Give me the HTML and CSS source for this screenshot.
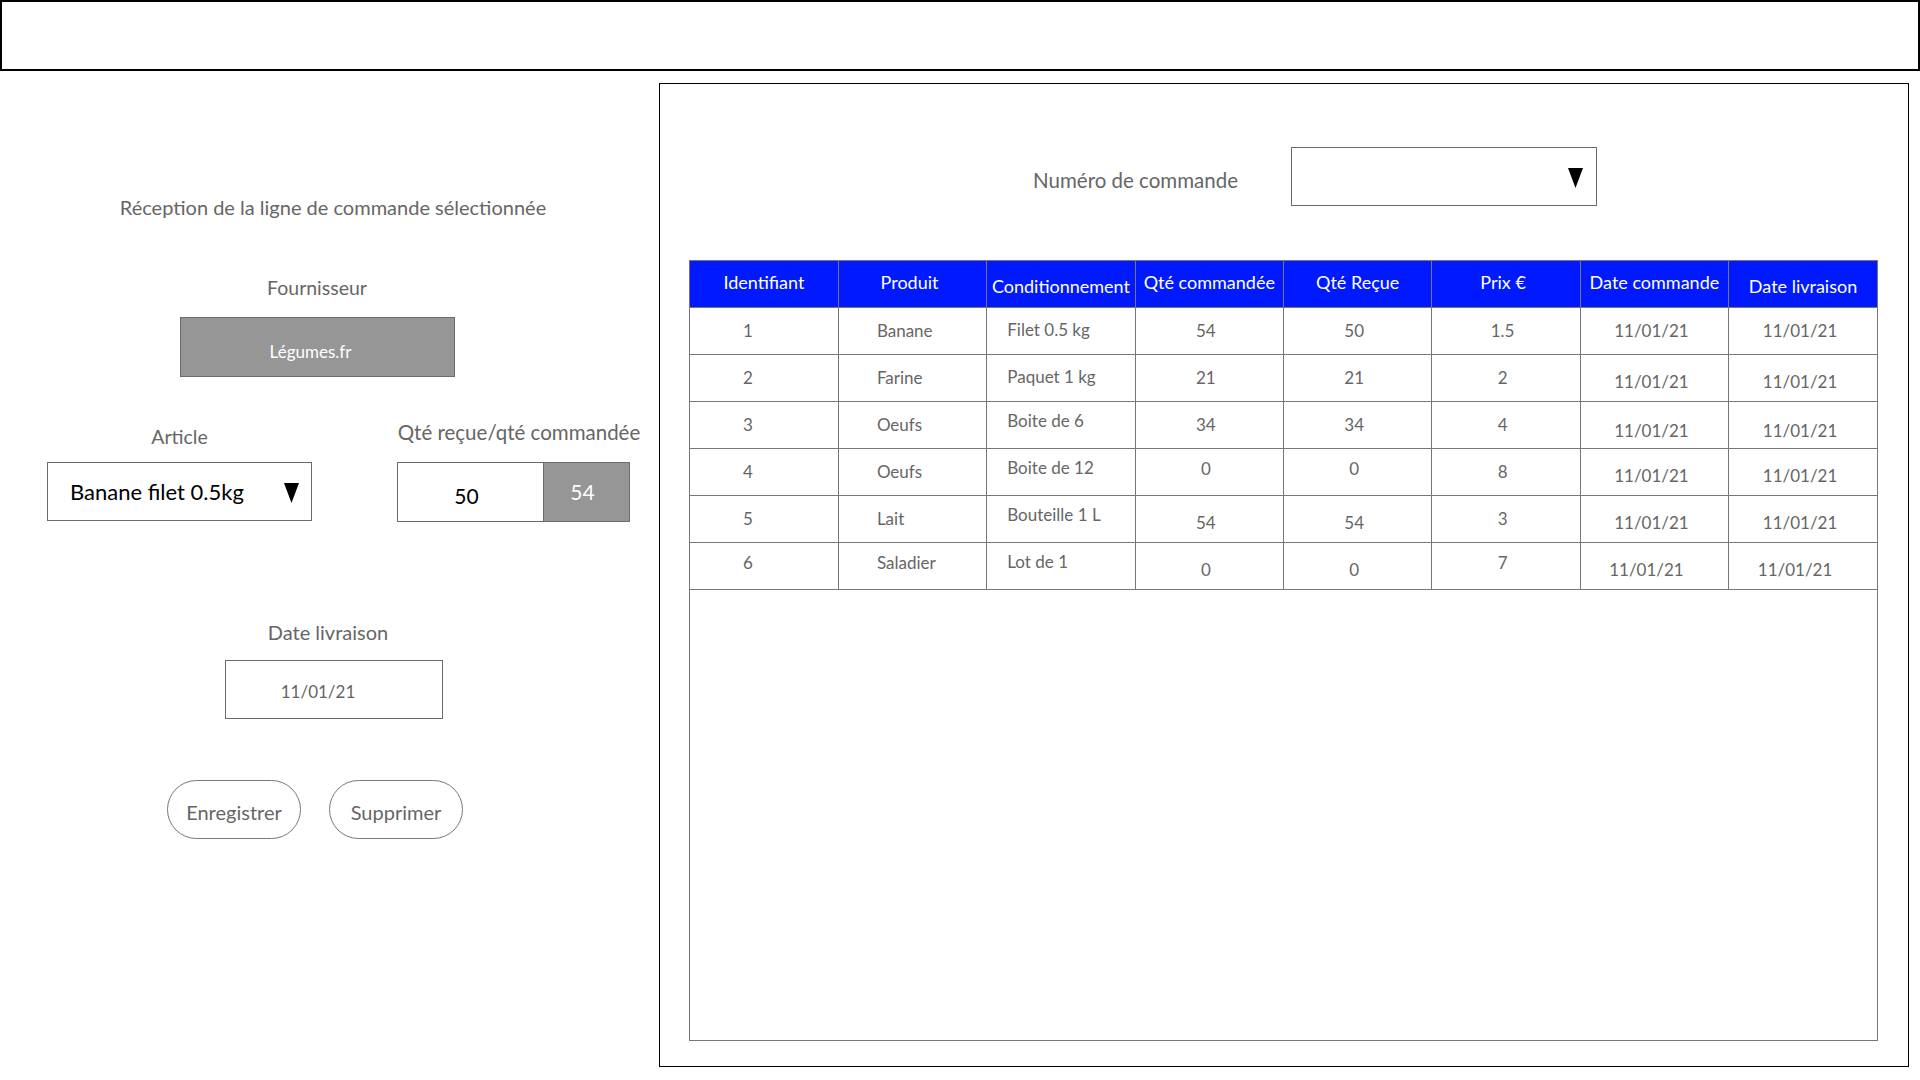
FILE: index.html
```html
<!DOCTYPE html>
<html lang="fr">
<head>
<meta charset="utf-8">
<title>Réception de commande</title>
<link rel="stylesheet" href="styles.css">
</head>
<body>
<header class="topbar"></header>
<main class="main">
  <section class="left">
    <div class="title">Réception de la ligne de commande sélectionnée</div>
    <div class="lbl-fourn">Fournisseur</div>
    <div class="supplier">Légumes.fr</div>
    <div class="pair">
      <div class="col col-article">
        <div class="lbl lbl-article">Article</div>
        <div class="select">
          <span class="select-text">Banane filet 0.5kg</span>
          <svg class="tri" viewBox="0 0 15 20" width="15" height="20"><polygon points="0,0 15,0 7.5,20" fill="#000"/></svg>
        </div>
      </div>
      <div class="col col-qty">
        <div class="lbl lbl-qty">Qté reçue/qté commandée</div>
        <div class="qty">
          <div class="qty-in">50</div>
          <div class="qty-out">54</div>
        </div>
      </div>
    </div>
    <div class="lbl-date">Date livraison</div>
    <div class="datebox">11/01/21</div>
    <div class="buttons">
      <div class="btn">Enregistrer</div>
      <div class="btn">Supprimer</div>
    </div>
  </section>
  <section class="right">
    <div class="order-row">
      <div class="order-lbl">Numéro de commande</div>
      <div class="order-select">
        <svg class="tri" viewBox="0 0 15 20" width="15" height="20"><polygon points="0,0 15,0 7.5,20" fill="#000"/></svg>
      </div>
    </div>
    <div class="grid-wrap">
      <table class="grid">
        <thead>
          <tr>
            <th>Identifiant</th>
            <th class="h-l">Produit</th>
            <th class="h-low">Conditionnement</th>
            <th>Qté commandée</th>
            <th>Qté Reçue</th>
            <th class="h-l">Prix €</th>
            <th>Date commande</th>
            <th class="h-low">Date livraison</th>
          </tr>
        </thead>
        <tbody>
          <tr>
            <td class="c-id">1</td><td class="c-prod">Banane</td><td class="c-cond">Filet 0.5 kg</td><td class="c-num">54</td><td class="c-num">50</td><td class="c-num">1.5</td><td class="c-date">11/01/21</td><td class="c-date">11/01/21</td>
          </tr>
          <tr>
            <td class="c-id">2</td><td class="c-prod">Farine</td><td class="c-cond">Paquet 1 kg</td><td class="c-num">21</td><td class="c-num">21</td><td class="c-num">2</td><td class="c-date dn">11/01/21</td><td class="c-date dn">11/01/21</td>
          </tr>
          <tr>
            <td class="c-id">3</td><td class="c-prod">Oeufs</td><td class="c-cond up">Boite de 6</td><td class="c-num">34</td><td class="c-num">34</td><td class="c-num">4</td><td class="c-date dn2">11/01/21</td><td class="c-date dn2">11/01/21</td>
          </tr>
          <tr>
            <td class="c-id">4</td><td class="c-prod">Oeufs</td><td class="c-cond up">Boite de 12</td><td class="c-num up">0</td><td class="c-num up">0</td><td class="c-num">8</td><td class="c-date dn">11/01/21</td><td class="c-date dn">11/01/21</td>
          </tr>
          <tr>
            <td class="c-id">5</td><td class="c-prod">Lait</td><td class="c-cond up">Bouteille 1 L</td><td class="c-num dn">54</td><td class="c-num dn">54</td><td class="c-num">3</td><td class="c-date dn">11/01/21</td><td class="c-date dn">11/01/21</td>
          </tr>
          <tr>
            <td class="c-id up">6</td><td class="c-prod up">Saladier</td><td class="c-cond up">Lot de 1</td><td class="c-num dn">0</td><td class="c-num dn">0</td><td class="c-num up">7</td><td class="c-date dn shift-l">11/01/21</td><td class="c-date dn shift-l">11/01/21</td>
          </tr>
        </tbody>
      </table>
    </div>
  </section>
</main>
</body>
</html>
```
FILE: styles.css
```css
* { box-sizing: border-box; }
html, body { margin: 0; padding: 0; background: #fff; }
body {
  width: 1920px;
  height: 1080px;
  overflow: hidden;
  font-family: Lato, "Open Sans", "Noto Sans", sans-serif;
  color: #666;
}

.topbar {
  height: 71px;
  border: 2px solid #000;
}

.main {
  display: flex;
  align-items: flex-start;
}

/* ---------- left form ---------- */
.left {
  flex: none;
  width: 659px;
  padding-top: 124px;
}
.title {
  width: 666px;
  text-align: center;
  font-size: 20px;
  line-height: 24px;
}
.lbl-fourn {
  margin: 57px 0 0 217px;
  width: 200px;
  text-align: center;
  font-size: 19.5px;
  line-height: 24px;
}
.supplier {
  margin: 17px 0 0 180px;
  width: 275px;
  height: 60px;
  background: #969696;
  border: 1px solid #6b6b6b;
  color: #fff;
  font-size: 17px;
  display: flex;
  align-items: center;
  justify-content: center;
  padding: 8px 14px 0 0;
}
.pair {
  margin: 43px 0 0 47px;
  display: flex;
  gap: 85px;
}
.col-article { width: 265px; }
.col-qty { width: 233px; }
.lbl {
  height: 42px;
  font-size: 19.5px;
  line-height: 24px;
  text-align: center;
}
.lbl-article { padding-top: 5px; }
.lbl-qty { width: 244px; white-space: nowrap; font-size: 20.5px; }
.select {
  height: 59px;
  border: 1px solid #6b6b6b;
  display: flex;
  align-items: center;
  justify-content: space-between;
  padding: 0 12px 0 22px;
  color: #000;
}
.select-text { font-size: 22px; }
.select .tri { margin-top: 2px; }
.qty {
  display: flex;
  height: 60px;
}
.qty-in {
  width: 146px;
  border: 1px solid #6b6b6b;
  border-right: none;
  display: flex;
  align-items: center;
  justify-content: center;
  padding: 6px 8px 0 0;
  color: #000;
  font-size: 21px;
}
.qty-out {
  width: 87px;
  background: #969696;
  border: 1px solid #6b6b6b;
  display: flex;
  align-items: center;
  justify-content: center;
  padding: 0 8px 2px 0;
  color: #fff;
  font-size: 21px;
}
.lbl-date {
  margin: 98px 0 0 228px;
  width: 200px;
  text-align: center;
  font-size: 20px;
  line-height: 24px;
}
.datebox {
  margin: 16px 0 0 225px;
  width: 218px;
  height: 59px;
  border: 1px solid #6b6b6b;
  display: flex;
  align-items: center;
  justify-content: center;
  padding: 4px 32px 0 0;
  font-size: 17px;
}
.buttons {
  margin: 61px 0 0 167px;
  display: flex;
  gap: 28px;
}
.btn {
  width: 134px;
  height: 59px;
  border: 1px solid #777;
  border-radius: 30px;
  display: flex;
  align-items: center;
  justify-content: center;
  padding-top: 4px;
  font-size: 20px;
}

/* ---------- right panel ---------- */
.right {
  flex: none;
  width: 1250px;
  height: 984px;
  margin-top: 12px;
  border: 1px solid #000;
  padding: 63px 30px 25px 29px;
  display: flex;
  flex-direction: column;
}
.order-row {
  display: flex;
  align-items: center;
  gap: 53px;
}
.order-lbl {
  width: 549px;
  text-align: right;
  font-size: 20.5px;
  padding-top: 6px;
}
.order-select {
  width: 306px;
  height: 59px;
  border: 1px solid #6b6b6b;
  display: flex;
  align-items: center;
  justify-content: flex-end;
  padding: 2px 13px 0 0;
}
.grid-wrap {
  margin-top: 54px;
  flex: 1;
  border: 1px solid #777;
}
.grid {
  width: 100%;
  border-collapse: collapse;
  table-layout: fixed;
}
.grid th {
  height: 46px;
  background: #0019ff;
  color: #fff;
  font-weight: 400;
  font-size: 18px;
  border: 1px solid #777;
  border-top: none;
  padding: 0 0 3px;
  text-align: center;
  vertical-align: middle;
  white-space: nowrap;
}
.grid th:first-child { border-left: none; }
.grid th:last-child { border-right: none; }
.grid th.h-low { padding: 4px 0 0; }
.grid th.h-l { padding-right: 6px; }
.grid td {
  height: 47px;
  border: 1px solid #777;
  font-size: 17px;
  color: #666;
  padding: 0;
  vertical-align: middle;
  white-space: nowrap;
}
.grid td:first-child { border-left: none; }
.grid td:last-child { border-right: none; }
.c-id { text-align: left; padding-left: 53px !important; }
.c-prod { text-align: left; padding-left: 38px !important; }
.c-cond { text-align: left; padding-left: 20px !important; padding-bottom: 3px !important; }
.c-num { text-align: center; padding-right: 7px !important; }
.c-date { text-align: center; padding-right: 6px !important; }
.grid td.up { padding-bottom: 6px; }
.grid td.c-cond.up { padding-bottom: 8px !important; }
.grid td.dn { padding-top: 8px; }
.grid td.dn2 { padding-top: 12px; }
.grid td.shift-l { padding-right: 16px !important; }
```
